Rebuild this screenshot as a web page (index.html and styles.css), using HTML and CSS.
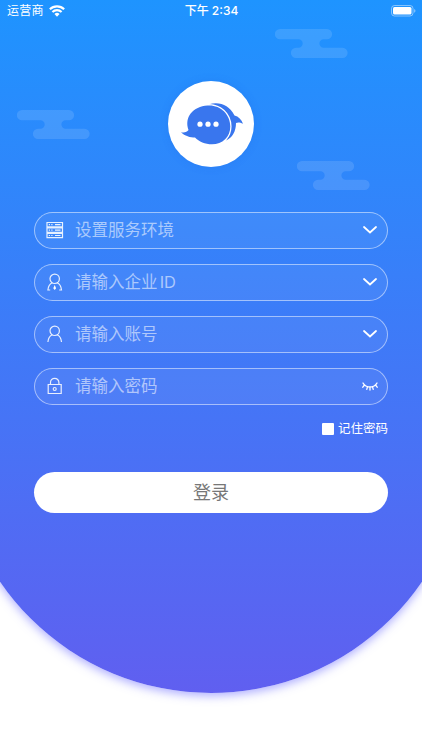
FILE: index.html
```html
<!DOCTYPE html>
<html lang="zh-CN">
<head>
    <meta charset="UTF-8">
    <meta name="viewport" content="width=device-width, initial-scale=1.0">
    <title>登录</title>
    <link rel="stylesheet" href="styles.css">
</head>
<body>

    <svg class="defs" width="0" height="0">
        <symbol id="cloud" viewBox="0 0 73 29">
            <path d="M5 0H52a5 5 0 0 1 0 10.3H48.600a4.200 4.200 0 0 0 0 8.400H67.500a5 5 0 0 1 0 10.300H21a5 5 0 0 1 0-10.300H23.500a4.200 4.200 0 0 0 0-8.400H5A5 5 0 0 1 5 0Z"/>
        </symbol>
        <symbol id="chevron" viewBox="0 0 14 8">
            <path d="M1 1l6 5.500L13 1"/>
        </symbol>
    </svg>

    <div class="page">
        <div class="panel">
            <div class="status-bar">
                <div class="carrier">
                    <span>运营商</span>
                    <svg class="wifi" width="16" height="12" viewBox="0 0 15 11">
                        <path class="arc" d="M0.800 3.900a9.500 9.500 0 0 1 13.400 0M3.200 6.400a6.100 6.100 0 0 1 8.600 0"/>
                        <path class="dot" d="M5.100 8.300a3.400 3.400 0 0 1 4.800 0L7.500 10.800Z"/>
                    </svg>
                </div>
                <div class="time">下午 2:34</div>
                <div class="battery-box">
                    <svg class="battery" width="25" height="12" viewBox="0 0 25 12">
                        <rect class="shell" x="0.500" y="0.500" width="21.500" height="10.500" rx="3"/>
                        <rect class="charge" x="2" y="2" width="18.500" height="7.500" rx="1.500"/>
                        <path class="cap" d="M23.200 4v3.700a2 2 0 0 0 0-3.700Z"/>
                    </svg>
                </div>
            </div>

            <svg class="cloud cloud-top"><use href="#cloud"/></svg>
            <svg class="cloud cloud-left"><use href="#cloud"/></svg>
            <svg class="cloud cloud-right"><use href="#cloud"/></svg>

            <div class="logo">
                <svg width="62" height="42" viewBox="0 0 62 42">
                    <path d="M28 1.200C39-1.500 48 2 53.500 12.500C57.500 13.500 60.500 16.500 62 20.800C59 19.300 57 19 55 20C55 28 51.500 35 45 37.500C50 31 51.500 21 47.500 13.500C44 6.500 37 2 28 1.200Z"/>
                    <path class="front" d="M26.500 2.500C39 1.500 49.300 11 49.300 23.500C49.300 34 41.500 41.300 31 41.300C24 41.300 18 38.500 14 34.500C9.500 34.500 3.500 33 0 29.200C3.500 29.700 6 29.200 7.500 27C3 14 12 3.500 26.500 2.500Z"/>
                    <g class="dots">
                        <circle cx="19" cy="21.200" r="2.600"/>
                        <circle cx="27" cy="21.200" r="2.600"/>
                        <circle cx="35" cy="21.200" r="2.600"/>
                    </g>
                </svg>
            </div>

            <form class="login-form">
                <label class="field">
                    <svg class="icon" viewBox="0 0 18 18">
                        <path d="M1 1.500h15.500v4.400h-15.500zM1 6.900h15.500v4.400h-15.500zM1 12.300h15.500v4.400h-15.500zM9 3.700h5.500M9 9.100h5.500M9 14.500h5.500M2.800 3.700h1.200M5.300 3.700h1.200M2.800 9.100h1.200M5.300 9.100h1.200M2.800 14.500h1.200M5.300 14.500h1.200"/>
                    </svg>
                    <input type="text" placeholder="设置服务环境">
                    <svg class="arrow"><use href="#chevron"/></svg>
                </label>
                <label class="field">
                    <svg class="icon" viewBox="0 0 18 18">
                        <circle cx="8.700" cy="5.800" r="4.700"/>
                        <path d="M6.200 9.800C3.700 11 2.200 13.500 1.900 17H4.200M11.200 9.800C13.700 11 15.200 13.500 15.500 17H13.200"/>
                        <path class="solid" d="M8.700 12l1.400 3.200L8.700 17l-1.400-1.800Z"/>
                    </svg>
                    <input class="company" type="text" placeholder="请输入企业 ID">
                    <svg class="arrow"><use href="#chevron"/></svg>
                </label>
                <label class="field">
                    <svg class="icon" viewBox="0 0 18 18">
                        <circle cx="8.700" cy="5.800" r="4.700"/>
                        <path d="M6.200 9.800C3.700 11 2.200 13.500 1.900 17M11.200 9.800C13.700 11 15.200 13.500 15.500 17"/>
                    </svg>
                    <input type="text" placeholder="请输入账号">
                    <svg class="arrow"><use href="#chevron"/></svg>
                </label>
                <label class="field">
                    <svg class="icon" viewBox="0 0 18 18">
                        <path d="M2.200 7.500h13v9h-13zM4.500 7.500V5.500a4.200 4.200 0 0 1 8.400 0v2"/>
                        <circle cx="8.700" cy="12" r="1.500"/>
                    </svg>
                    <input type="password" placeholder="请输入密码">
                    <svg class="eye" viewBox="0 0 16 9">
                        <path d="M1 1C4 6.300 12 6.300 15 1M2.500 3L0.800 5.200M5.500 4.700L4.800 7.300M8 5v3M10.500 4.700l.7 2.600M13.500 3l1.700 2.200"/>
                    </svg>
                </label>

                <label class="remember">
                    <input type="checkbox">
                    <span>记住密码</span>
                </label>

                <button type="button" class="login-btn">登录</button>
            </form>
        </div>
    </div>

</body>
</html>
```
FILE: styles.css
```css
:root {
    --top-color: #1e94ff;
    --bottom-color: #605ff0;
    --logo-color: #3976ee;
}

* {
    box-sizing: border-box;
}

body {
    margin: 0;
    background: #fff;
    color: #fff;
    font-family: Inter, 'Noto Sans CJK SC', sans-serif;
}

.defs {
    position: absolute;
}

.page {
    width: 422px;
    height: 750px;
    overflow: hidden;
}

/* wider than the screen, so the sides cut the round bottom */
.panel {
    position: relative;
    width: 510px;
    height: 693px;
    margin-left: -44px;
    padding: 0 44px;
    border-radius: 0 0 255px 255px / 0 0 254px 254px;
    background: linear-gradient(var(--top-color), var(--bottom-color));
    box-shadow: 0 3px 10px rgba(96, 95, 255, 0.5);
}

.status-bar {
    display: grid;
    grid-template-columns: 1fr auto 1fr;
    align-items: center;
    height: 21px;
    padding: 0 6px 0 7px;
    font-size: 12px;
    line-height: 20px;
}

.carrier {
    display: flex;
    align-items: center;
    gap: 5px;
    letter-spacing: 0.3px;
}

.carrier span,
.time {
    padding-top: 1px;
}

.wifi .arc {
    fill: none;
    stroke: #fff;
    stroke-width: 2;
}

.wifi .dot {
    fill: #fff;
}

.time {
    font-weight: 500;
}

.battery-box {
    display: flex;
    justify-content: flex-end;
}

.battery .shell {
    fill: none;
    stroke: rgba(255, 255, 255, 0.45);
}

.battery .charge {
    fill: #fff;
}

.battery .cap {
    fill: rgba(255, 255, 255, 0.5);
}

.cloud {
    position: absolute;
    width: 73px;
    height: 29px;
    fill: rgba(255, 255, 255, 0.12);
}

.cloud-top {
    left: 319px;
    top: 29px;
}

.cloud-left {
    left: 61px;
    top: 110px;
}

.cloud-right {
    left: 341px;
    top: 161px;
}

.logo {
    display: flex;
    align-items: center;
    justify-content: center;
    width: 86px;
    height: 86px;
    margin: 59.5px auto 0;
    padding-left: 2px;
    border-radius: 50%;
    background: #fff;
    box-shadow: 0 0 8px rgba(30, 90, 220, 0.2);
    fill: var(--logo-color);
}

.logo .front {
    stroke: #fff;
    stroke-width: 2.5;
    paint-order: stroke;
}

.logo .dots {
    fill: #fff;
}

.login-form {
    display: flex;
    flex-direction: column;
    gap: 15px;
    padding: 45px 34px 0;
}

.field {
    display: flex;
    align-items: center;
    height: 37px;
    padding: 0 10px 0 11px;
    border: 1px solid rgba(255, 255, 255, 0.5);
    border-radius: 19px;
    background: rgba(255, 255, 255, 0.06);
}

.icon {
    width: 18px;
    height: 18px;
    fill: none;
    stroke: rgba(255, 255, 255, 0.88);
    stroke-width: 1.2;
}

.icon .solid {
    fill: #fff;
    stroke: none;
}

.field input {
    flex: 1;
    min-width: 0;
    height: 34px;
    margin: 0;
    padding: 0 0 0 11px;
    border: none;
    outline: none;
    background: none;
    color: #fff;
    font-family: inherit;
    font-size: 16.5px;
}

.field input::placeholder {
    color: rgba(255, 255, 255, 0.56);
}

.field .company {
    word-spacing: -2.5px;
}

.arrow,
.eye {
    fill: none;
    stroke: #fff;
    stroke-linecap: round;
}

.arrow {
    width: 14px;
    height: 8px;
    stroke-width: 1.8;
}

.eye {
    width: 16px;
    height: 9px;
    margin-right: -1px;
    stroke-width: 1.3;
}

.remember {
    display: flex;
    align-items: center;
    justify-content: flex-end;
    gap: 4px;
    height: 18px;
    font-size: 12.5px;
    line-height: 18px;
}

.remember input {
    appearance: none;
    width: 12px;
    height: 12px;
    margin: 0;
    border-radius: 1px;
    background: #fff;
}

.login-btn {
    height: 41px;
    margin-top: 19px;
    padding: 0 0 3px;
    border: none;
    border-radius: 21px;
    background: #fff;
    color: #777;
    font-family: inherit;
    font-size: 18px;
}
```
